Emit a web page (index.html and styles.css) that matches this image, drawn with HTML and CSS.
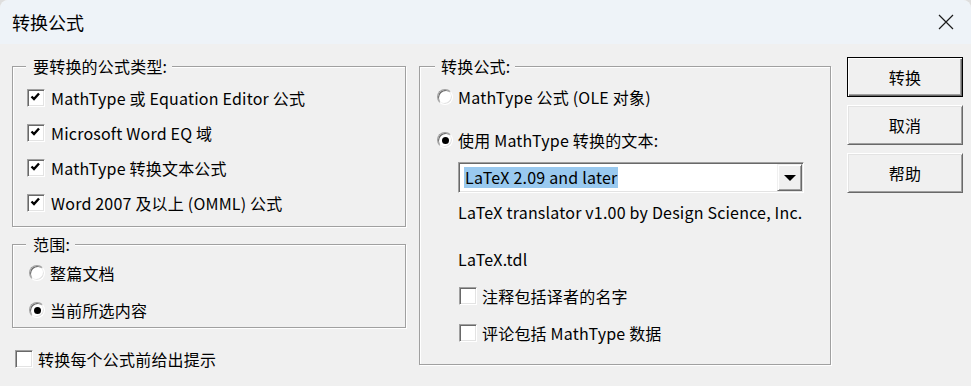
FILE: index.html
```html
<!DOCTYPE html>
<html lang="zh-CN">
<head>
<meta charset="utf-8">
<title>转换公式</title>
<link rel="stylesheet" href="styles.css">
</head>
<body>
<div class="dialog">
  <div class="titlebar">
    <span class="title">转换公式</span>
    <svg class="close" width="16" height="16" viewBox="0 0 16 16"><path d="M1 1 L15 15 M15 1 L1 15" stroke="#1b1b1b" stroke-width="1.2" fill="none"/></svg>
  </div>
  <div class="main">
    <div class="col-left">
      <div class="group g1">
        <span class="legend">要转换的公式类型:</span>
        <div class="rows rows1">
          <div class="row"><span class="cb"><svg viewBox="0 0 16 16" width="16" height="16"><polyline points="3.5,6.5 6,9 11,3.5" fill="none" stroke="#000" stroke-width="2.4"/></svg></span>MathType 或 Equation Editor 公式</div>
          <div class="row"><span class="cb"><svg viewBox="0 0 16 16" width="16" height="16"><polyline points="3.5,6.5 6,9 11,3.5" fill="none" stroke="#000" stroke-width="2.4"/></svg></span>Microsoft Word EQ 域</div>
          <div class="row"><span class="cb"><svg viewBox="0 0 16 16" width="16" height="16"><polyline points="3.5,6.5 6,9 11,3.5" fill="none" stroke="#000" stroke-width="2.4"/></svg></span>MathType 转换文本公式</div>
          <div class="row"><span class="cb"><svg viewBox="0 0 16 16" width="16" height="16"><polyline points="3.5,6.5 6,9 11,3.5" fill="none" stroke="#000" stroke-width="2.4"/></svg></span>Word 2007 及以上 (OMML) 公式</div>
        </div>
      </div>
      <div class="group g2">
        <span class="legend">范围:</span>
        <div class="rows rows2">
          <div class="row r24"><span class="rb"></span>整篇文档</div>
          <div class="row r24"><span class="rb on"></span>当前所选内容</div>
        </div>
      </div>
      <div class="row r24 prompt"><span class="cb"></span>转换每个公式前给出提示</div>
    </div>
    <div class="group g3">
      <span class="legend">转换公式:</span>
      <div class="row r24 opt1"><span class="rb"></span>MathType 公式 (OLE 对象)</div>
      <div class="row r24 opt2"><span class="rb on"></span>使用 MathType 转换的文本:</div>
      <div class="combo">
        <span class="sel">LaTeX 2.09 and later</span>
        <span class="drop"><span class="tri"></span></span>
      </div>
      <div class="info info1">LaTeX translator v1.00 by Design Science, Inc.</div>
      <div class="info info2">LaTeX.tdl</div>
      <div class="row r24 sub1"><span class="cb"></span>注释包括译者的名字</div>
      <div class="row r24 sub2"><span class="cb"></span>评论包括 MathType 数据</div>
    </div>
    <div class="buttons">
      <div class="btn default">转换</div>
      <div class="btn">取消</div>
      <div class="btn">帮助</div>
    </div>
  </div>
</div>
</body>
</html>
```
FILE: styles.css
```css
html, body {
  margin: 0;
  padding: 0;
  background: #dedede;
}
body {
  font-family: "Noto Sans CJK SC", "Noto Sans", sans-serif;
  font-size: 16px;
  letter-spacing: 0.2px;
  color: #000;
}
.dialog {
  width: 971px;
  height: 386px;
  overflow: hidden;
  background: #f0f0f0;
  border-radius: 8px 8px 0 0;
}
.titlebar {
  height: 44px;
  box-sizing: border-box;
  background: #eef3f8;
  display: flex;
  align-items: center;
  justify-content: space-between;
  padding: 0 17px 0 12px;
  border-radius: 8px 8px 0 0;
}
.title {
  font-size: 18px;
  line-height: 24px;
  letter-spacing: 0;
}
.close {
  display: block;
}
.main {
  display: flex;
  padding-left: 12px;
}
.col-left {
  width: 395px;
  display: flex;
  flex-direction: column;
  padding-top: 22px;
}
.group {
  border: 1px solid #a0a0a0;
  box-shadow: inset 1px 1px 0 #fff, 1px 1px 0 #fff;
  display: flex;
  flex-direction: column;
  box-sizing: border-box;
}
.legend {
  align-self: flex-start;
  margin-top: -11px;
  height: 20px;
  line-height: 20px;
  background: #f0f0f0;
  padding: 0 5px 0 7px;
  margin-left: 13px;
}
.g1 {
  width: 394px;
  height: 161px;
}
.rows1 {
  margin-top: 4px;
  padding-left: 14px;
}
.row {
  display: flex;
  align-items: center;
  height: 35px;
  white-space: nowrap;
}
.r24 {
  height: 24px;
}
.g2 {
  width: 394px;
  height: 84px;
  margin-top: 17px;
}
.rows2 {
  padding-top: 7px;
  padding-left: 16px;
  display: flex;
  flex-direction: column;
  gap: 13px;
}
.prompt {
  margin-top: 19px;
  margin-left: 3px;
}
.cb {
  width: 18px;
  height: 18px;
  box-sizing: border-box;
  background: #fff;
  border: 1px solid;
  border-color: #a0a0a0 #fff #fff #a0a0a0;
  box-shadow: inset 1px 1px 0 #696969, inset -1px -1px 0 #e3e3e3;
  margin-right: 5px;
  flex: none;
}
.rows1 .cb {
  margin-right: 6px;
}
.cb svg {
  display: block;
}
.rb {
  width: 16px;
  height: 16px;
  box-sizing: border-box;
  border-radius: 50%;
  background: #fff;
  border: 1px solid;
  border-color: #a0a0a0 #fff #fff #a0a0a0;
  box-shadow: inset 1px 1px 0 #696969, inset -1px -1px 0 #e3e3e3;
  margin-right: 5px;
  flex: none;
  display: flex;
  align-items: center;
  justify-content: center;
}
.rb.on::after {
  content: "";
  width: 7px;
  height: 7px;
  border-radius: 50%;
  background: #000;
}
.g3 {
  width: 412px;
  height: 299px;
  margin-top: 22px;
  margin-left: 12px;
}
.g3 .legend {
  margin-left: 15px;
  padding: 0 5px 0 6px;
}
.opt1 {
  margin-top: 9px;
  margin-left: 17px;
}
.opt2 {
  margin-top: 19px;
  margin-left: 17px;
}
.combo {
  margin-top: 10px;
  margin-left: 38px;
  width: 346px;
  height: 31px;
  box-sizing: border-box;
  background: #fff;
  border: 1px solid;
  border-color: #a0a0a0 #fff #fff #a0a0a0;
  box-shadow: inset 1px 1px 0 #696969, inset -1px -1px 0 #e3e3e3;
  display: flex;
  align-items: center;
  padding: 1px 1px 1px 5px;
}
.sel {
  background: #99c9ef;
  height: 21px;
  line-height: 21px;
  padding: 0 1px;
  white-space: nowrap;
}
.drop {
  margin-left: auto;
  width: 25px;
  height: 27px;
  box-sizing: border-box;
  background: #f0f0f0;
  border: 1px solid;
  border-color: #f0f0f0 #696969 #696969 #f0f0f0;
  box-shadow: inset 1px 1px 0 #fff, inset -1px -1px 0 #a0a0a0;
  display: flex;
  align-items: center;
  justify-content: center;
}
.tri {
  width: 0;
  height: 0;
  border-left: 6px solid transparent;
  border-right: 6px solid transparent;
  border-top: 6px solid #000;
  margin-top: 1px;
}
.info {
  margin-left: 38px;
  height: 20px;
  line-height: 20px;
  white-space: nowrap;
}
.info1 {
  margin-top: 9px;
}
.info2 {
  margin-top: 27px;
}
.sub1 {
  margin-top: 15px;
  margin-left: 39px;
}
.sub2 {
  margin-top: 13px;
  margin-left: 39px;
}
.buttons {
  margin-left: 16px;
  padding-top: 13px;
  display: flex;
  flex-direction: column;
  gap: 8px;
}
.btn {
  width: 116px;
  height: 40px;
  box-sizing: border-box;
  background: #f0f0f0;
  border: 1px solid;
  border-color: #fff #696969 #696969 #fff;
  box-shadow: inset 1px 1px 0 #e3e3e3, inset -1px -1px 0 #a0a0a0;
  display: flex;
  align-items: center;
  justify-content: center;
}
.btn.default {
  border-color: #000;
  box-shadow: inset 1px 1px 0 #fff, inset -1px -1px 0 #696969, inset -2px -2px 0 #a0a0a0;
}
```
